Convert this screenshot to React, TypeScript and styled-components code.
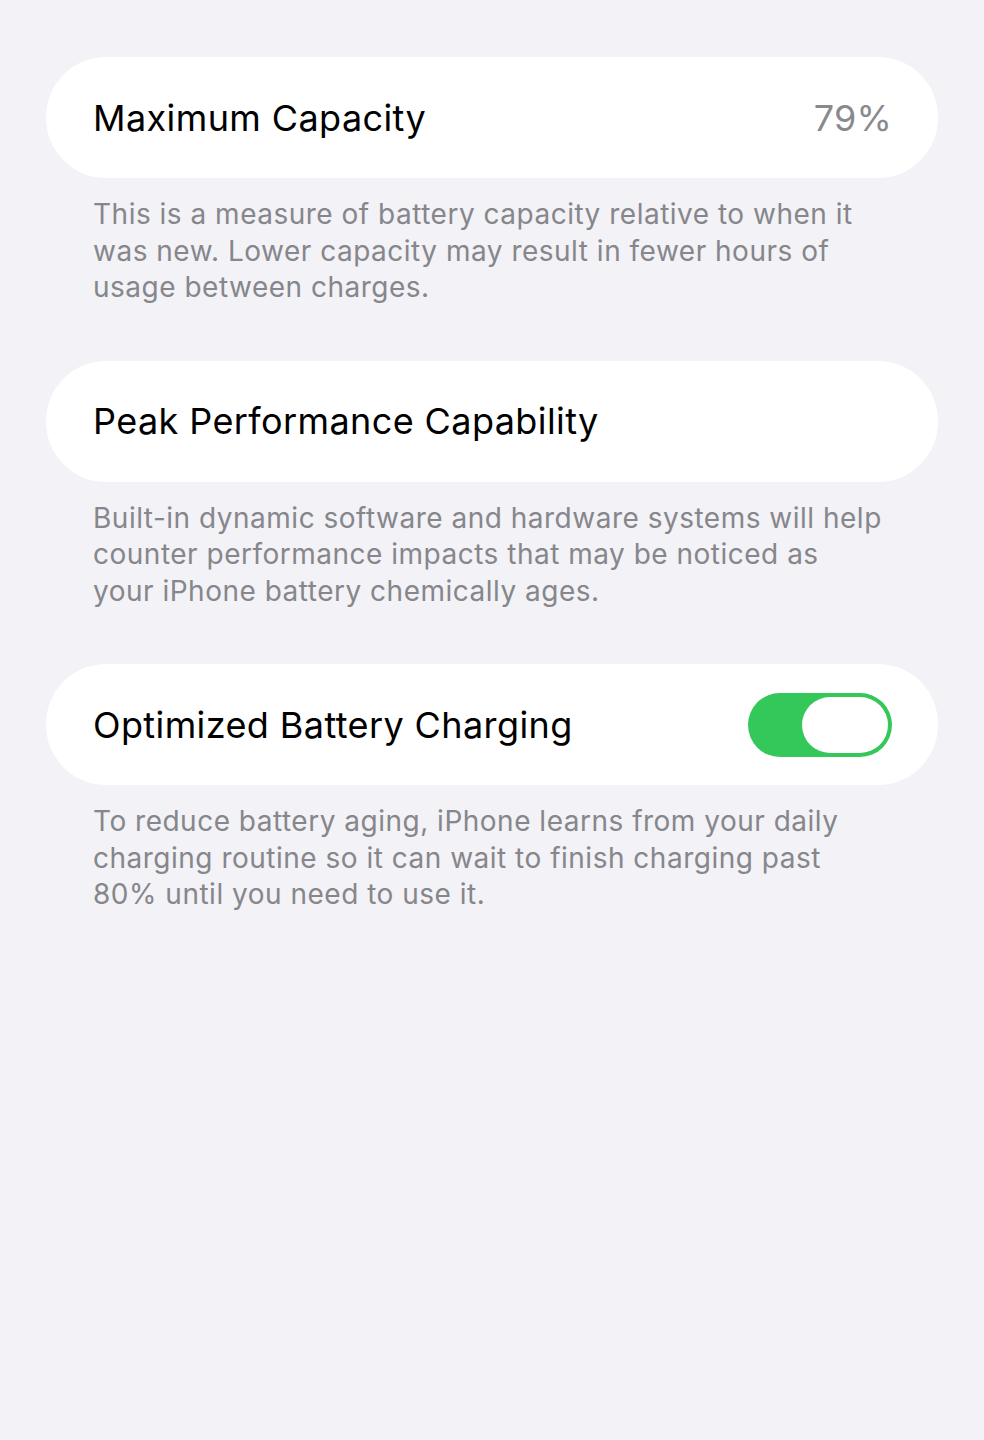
import React, { useState } from "react";
import styled, { createGlobalStyle } from "styled-components";

const GlobalStyle = createGlobalStyle`
  html, body {
    margin: 0;
    padding: 0;
    background: #f2f2f7;
  }
  body {
    font-family: Inter, "Noto Sans", sans-serif;
    -webkit-font-smoothing: antialiased;
  }
`;

const sections = [
  {
    title: "Maximum Capacity",
    value: "79%",
    footer:
      "This is a measure of battery capacity relative to when it was new. Lower capacity may result in fewer hours of usage between charges.",
  },
  {
    title: "Peak Performance Capability",
    footer:
      "Built-in dynamic software and hardware systems will help counter performance impacts that may be noticed as your iPhone battery chemically ages.",
  },
  {
    title: "Optimized Battery Charging",
    toggle: true,
    footer:
      "To reduce battery aging, iPhone learns from your daily charging routine so it can wait to finish charging past 80% until you need to use it.",
  },
];

const App = () => {
  const [optimized, setOptimized] = useState(true);

  return (
    <>
      <GlobalStyle />
      <Page>
        {sections.map((s) => (
          <Section key={s.title}>
            <Card>
              <Title>{s.title}</Title>
              {s.value && <Value>{s.value}</Value>}
              {s.toggle && (
                <Switch
                  $on={optimized}
                  onClick={() => setOptimized(!optimized)}
                  aria-pressed={optimized}
                >
                  <Knob />
                </Switch>
              )}
            </Card>
            <Footer>{s.footer}</Footer>
          </Section>
        ))}
      </Page>
    </>
  );
};

const Page = styled.div`
  min-height: 1440px;
  box-sizing: border-box;
  padding: 57px 46px 0;
  background: #f2f2f7;
`;

const Section = styled.section`
  display: flex;
  flex-direction: column;
  margin-bottom: 55px;
`;

const Card = styled.div`
  display: flex;
  align-items: center;
  justify-content: space-between;
  height: 121px;
  box-sizing: border-box;
  padding: 0 46px 0 47px;
  background: #ffffff;
  border-radius: 60px;
`;

const Title = styled.div`
  font-size: 36px;
  color: #000000;
  letter-spacing: 0.4px;
`;

const Value = styled.div`
  font-size: 36px;
  color: #8a8a8e;
  letter-spacing: 0.2px;
`;

const Footer = styled.p`
  margin: 0;
  padding: 18px 53px 0 47px;
  font-size: 28px;
  line-height: 36.5px;
  letter-spacing: 0.5px;
  color: #86868b;
`;

const Switch = styled.button<{ $on: boolean }>`
  display: flex;
  align-items: center;
  justify-content: ${(p) => (p.$on ? "flex-end" : "flex-start")};
  width: 144px;
  height: 64px;
  padding: 0 4px;
  box-sizing: border-box;
  border: none;
  border-radius: 32px;
  background: ${(p) => (p.$on ? "#34c759" : "#e9e9ea")};
  cursor: pointer;
`;

const Knob = styled.span`
  width: 86px;
  height: 56px;
  border-radius: 28px;
  background: #ffffff;
`;

export default App;
